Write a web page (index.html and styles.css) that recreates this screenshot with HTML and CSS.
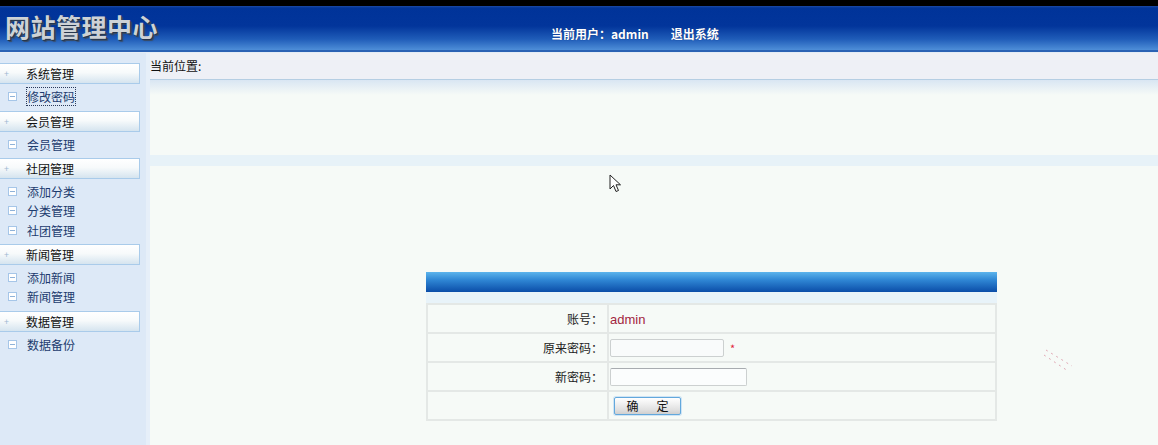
FILE: index.html
```html
<!DOCTYPE html>
<html lang="zh-CN">
<head>
  <meta charset="utf-8">
  <title>网站管理中心</title>
  <link rel="stylesheet" href="styles.css">
</head>
<body>
  <div class="topline"></div>
  <div class="header">
    <div class="logo">网站管理中心</div>
    <div class="userinfo">
      <span>当前用户：admin</span>
      <a href="#">退出系统</a>
    </div>
  </div>
  <div class="header-edge"></div>

  <div class="page">
    <div class="sidebar">
      <div class="menu-title"><span class="plus">+</span>系统管理</div>
      <ul class="menu-list">
        <li><span class="box"></span><a href="#" class="focus">修改密码</a></li>
      </ul>
      <div class="menu-title"><span class="plus">+</span>会员管理</div>
      <ul class="menu-list">
        <li><span class="box"></span><a href="#">会员管理</a></li>
      </ul>
      <div class="menu-title"><span class="plus">+</span>社团管理</div>
      <ul class="menu-list">
        <li><span class="box"></span><a href="#">添加分类</a></li>
        <li><span class="box"></span><a href="#">分类管理</a></li>
        <li><span class="box"></span><a href="#">社团管理</a></li>
      </ul>
      <div class="menu-title"><span class="plus">+</span>新闻管理</div>
      <ul class="menu-list">
        <li><span class="box"></span><a href="#">添加新闻</a></li>
        <li><span class="box"></span><a href="#">新闻管理</a></li>
      </ul>
      <div class="menu-title"><span class="plus">+</span>数据管理</div>
      <ul class="menu-list">
        <li><span class="box"></span><a href="#">数据备份</a></li>
      </ul>
    </div>

    <div class="main">
      <div class="crumb">当前位置:</div>
      <div class="crumb-shade"></div>
      <div class="stripe"></div>

      <div class="form-wrap">
        <div class="form-head"></div>
        <div class="form-sub"></div>
        <table class="form-table">
          <tr>
            <td class="label">账号：</td>
            <td class="value"><span class="account">admin</span></td>
          </tr>
          <tr>
            <td class="label">原来密码：</td>
            <td class="value"><input type="password" class="input-old"><span class="star">*</span></td>
          </tr>
          <tr>
            <td class="label">新密码：</td>
            <td class="value"><input type="password" class="input-new"></td>
          </tr>
          <tr>
            <td class="label"></td>
            <td class="value"><button class="btn">确&emsp;&ensp;定</button></td>
          </tr>
        </table>
      </div>

      <svg class="cursor" width="14" height="20" viewBox="0 0 14 20">
        <path d="M1 1 L1 15 L4.5 11.5 L7 17.5 L9.5 16.5 L7 10.8 L11.5 10.8 Z" fill="#fff" stroke="#222" stroke-width="1"/>
      </svg>
      <svg class="dashes" width="32" height="26" viewBox="0 0 32 26">
        <g stroke="#e0a8b4" stroke-width="1" stroke-dasharray="2 4">
          <line x1="2" y1="2" x2="28" y2="18"/>
          <line x1="0" y1="7" x2="24" y2="23"/>
        </g>
      </svg>
    </div>
  </div>
</body>
</html>
```

FILE: styles.css
```css
body {
  margin: 0;
  background: #f6faf7;
  font-family: "Noto Sans CJK SC", "Liberation Sans", sans-serif;
  font-size: 12px;
  color: #222;
  height: 445px;
  overflow: hidden;
}

a {
  text-decoration: none;
}

.topline {
  height: 6px;
  background: #000;
}

.header {
  height: 44px;
  display: flex;
  align-items: center;
  background: linear-gradient(to bottom, #1d4aa6 0px, #003399 2px, #02359b 20px, #1f5cb8 33px, #4e8ed8 44px);
}

.header-edge {
  height: 3px;
  background: linear-gradient(to bottom, #2a62b4 0, #2a62b4 2px, #e4ecf6 2px);
}

.logo {
  font-size: 25px;
  font-weight: bold;
  letter-spacing: 0.5px;
  color: #cdd2d6;
  text-shadow: 1px 1px 0 #26364c, 2px 2px 1px #3a4a60;
  padding-left: 5px;
  width: 546px;
  margin-top: -4px;
}

.userinfo {
  display: flex;
  gap: 22px;
  color: #fff;
  font-weight: bold;
  font-size: 12px;
  margin-top: 10px;
  text-shadow: 0 0 1px #0a2a70;
}

.userinfo a {
  color: #fff;
}

.page {
  display: flex;
  position: relative;
}

.sidebar {
  width: 150px;
  height: 400px;
  background: #dde9f7;
  border-right: 4px solid #e6eff9;
  padding-top: 10px;
  box-sizing: border-box;
  flex-shrink: 0;
}

.menu-title {
  width: 139px;
  height: 19px;
  border: 1px solid #a9cbea;
  border-left: none;
  background: linear-gradient(to bottom, #ffffff 0, #f7fafb 45%, #d5e4ef 100%);
  display: flex;
  align-items: center;
  color: #111;
  line-height: 19px;
}

.plus {
  width: 26px;
  padding-left: 4px;
  box-sizing: border-box;
  color: #9fb8d2;
  font-size: 9px;
}

.menu-list {
  list-style: none;
  margin: 0;
  padding: 3px 0 4.25px;
}

.menu-list li {
  height: 19.25px;
  display: flex;
  align-items: center;
}

.box {
  width: 7px;
  height: 7px;
  margin-left: 8px;
  margin-right: 10px;
  border: 1px solid #a6c6e8;
  background: #ffffff linear-gradient(#8fb2d8, #8fb2d8) center / 5px 1px no-repeat;
}

.menu-list a {
  color: #1c3b6e;
}

.menu-list a.focus {
  outline: 1px dotted #2a3a5a;
}

.main {
  flex: 1;
  position: relative;
}

.crumb {
  height: 26px;
  line-height: 26px;
  padding-left: 0;
  background: #eef0f6;
  border-bottom: 1px solid #b5cee3;
  color: #111;
}

.crumb-shade {
  height: 15px;
  background: linear-gradient(to bottom, #d9e6f3, #f6faf7);
}

.stripe {
  height: 11px;
  margin-top: 60px;
  background: #e7f2f8;
}

.form-wrap {
  width: 571px;
  margin-left: 276px;
  margin-top: 106px;
}

.form-head {
  height: 20px;
  background: linear-gradient(to bottom, #5cb4ec 0, #2f86d4 40%, #0b4da8 100%);
}

.form-sub {
  height: 12px;
  background: #e8f3f9;
}

.form-table {
  width: 100%;
  border-collapse: separate;
  border-spacing: 2px;
  background: #e4e8e6;
  margin-top: -1px;
}

.form-table td {
  background: #f6faf7;
  height: 27px;
  padding: 0;
}

.label {
  width: 175px;
  text-align: right;
  padding-right: 4px !important;
  color: #222;
}

.value {
  padding-left: 1px !important;
}

.account {
  color: #a3253f;
  font-family: "Liberation Sans", sans-serif;
  font-size: 13px;
}

input {
  height: 18px;
  box-sizing: border-box;
  border: 1px solid #ccd0d0;
  border-radius: 2px;
  background: #f9fbfb;
  vertical-align: middle;
  margin: 0;
}

.input-old {
  width: 114px;
}

.input-new {
  width: 137px;
  border-top-color: #a8acb0;
  background: #fbfdfd;
}

.star {
  color: #e2223a;
  margin-left: 6px;
  font-size: 11px;
  vertical-align: middle;
}

.btn {
  margin-left: 4px;
  width: 67px;
  height: 18px;
  padding: 0;
  border: 1px solid #62a8dc;
  border-radius: 2px;
  background: linear-gradient(to bottom, #ffffff, #e2e2e2 70%, #cfcfcf);
  font-family: "Noto Sans CJK SC", sans-serif;
  font-size: 12px;
  line-height: 15px;
  color: #111;
  box-shadow: 0 0 0 1px #cfe4f4;
}

.cursor {
  position: absolute;
  left: 459px;
  top: 121px;
}

.dashes {
  position: absolute;
  left: 894px;
  top: 295px;
}
```
